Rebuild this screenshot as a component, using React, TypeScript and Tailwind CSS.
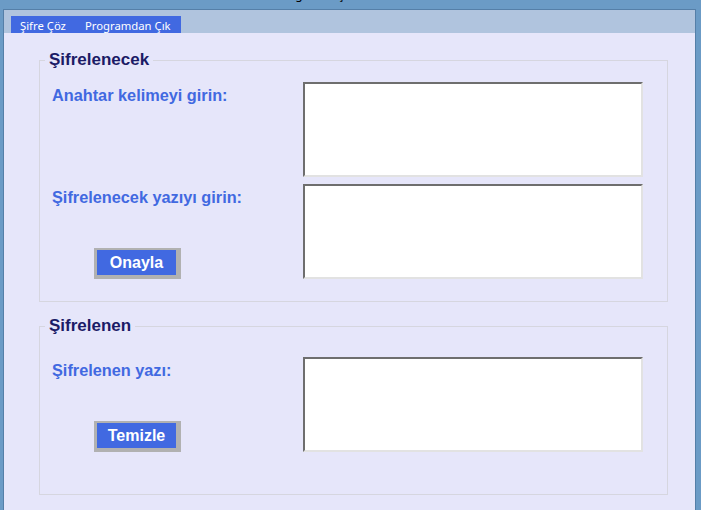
const labelCls =
  "text-[16.3px] leading-[18px] font-bold text-[#4169e1] pl-[12px] pt-[4px] whitespace-nowrap"

function TextBox() {
  return (
    <div className="w-[340px] h-[95px] bg-white border-2 border-[#e2e2e2] border-t-[#6e6e6e] border-l-[#6e6e6e]" />
  )
}

function BlueButton({ text }: { text: string }) {
  return (
    <button className="ml-[54px] w-[87px] h-[31px] border-t-2 border-l-[3px] border-r-[5px] border-b-4 border-[#b1b1b1] bg-[#4169e1] text-white text-[16px] leading-[18px] font-bold flex items-center justify-center">
      {text}
    </button>
  )
}

function Group({ title, children, className }: { title: string; children: React.ReactNode; className: string }) {
  return (
    <fieldset className={"ml-[35px] w-[629px] border border-[#d6d6df] p-0 m-0 " + className}>
      <legend className="ml-[5px] px-[4px] text-[17px] leading-[18px] font-bold text-[#1b1b66]">{title}</legend>
      {children}
    </fieldset>
  )
}

export default function App() {
  return (
    <div
      className="w-[701px] h-[510px] overflow-hidden bg-[#6b9bc6] flex flex-col pl-[3px] pr-[5px]"
      style={{ fontFamily: '"Liberation Sans", Arial, sans-serif' }}
    >
      {/* title bar, mostly cut off */}
      <div className="h-[9px] overflow-hidden">
        <div className="mt-[-11px] pl-[282px] text-[12px] leading-[12px] text-black" style={{ fontFamily: '"Noto Sans", sans-serif' }}>
          Vigenère Şifreleme
        </div>
      </div>

      <div className="flex-1 flex flex-col border-t border-l border-r border-[#557fa8]">
        {/* menu */}
        <div className="h-[23px] bg-[#b0c4de] pl-[7px] pt-[2px]" style={{ fontFamily: '"Noto Sans", sans-serif' }}>
          <div className="inline-flex h-[20px] items-center bg-[#4169e1] text-white text-[11.3px] pl-[9px] pr-[10px] gap-[19px]">
            <span>Şifre Çöz</span>
            <span>Programdan Çık</span>
          </div>
        </div>

        {/* content */}
        <div className="flex-1 bg-[#e6e6fa] pt-[18px]">
          <Group title="Şifrelenecek" className="">
            <div className="flex flex-col gap-[7px] pt-[13px] pb-[22px]">
              <div className="flex">
                <div className="w-[263px]">
                  <div className={labelCls}>Anahtar kelimeyi girin:</div>
                </div>
                <TextBox />
              </div>
              <div className="flex">
                <div className="w-[263px] flex flex-col justify-between">
                  <div className={labelCls}>Şifrelenecek yazıyı girin:</div>
                  <BlueButton text="Onayla" />
                </div>
                <TextBox />
              </div>
            </div>
          </Group>

          <Group title="Şifrelenen" className="mt-[15px]">
            <div className="flex pt-[22px] pb-[42px]">
              <div className="w-[263px] flex flex-col justify-between">
                <div className={labelCls}>Şifrelenen yazı:</div>
                <BlueButton text="Temizle" />
              </div>
              <TextBox />
            </div>
          </Group>
        </div>
      </div>
    </div>
  )
}
